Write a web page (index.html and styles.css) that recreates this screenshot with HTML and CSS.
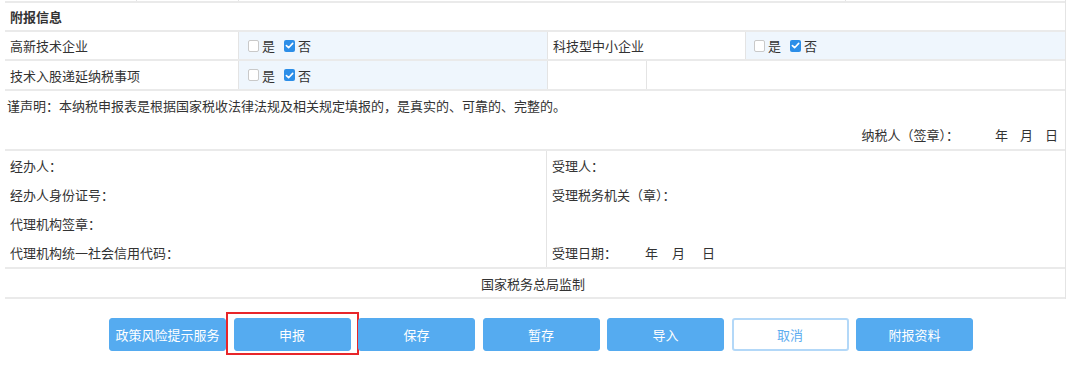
FILE: index.html
```html
<!DOCTYPE html>
<html lang="zh-CN">
<head>
<meta charset="utf-8">
<title>附报信息</title>
<link rel="stylesheet" href="styles.css">
</head>
<body>
<div class="form">
  <div class="row row-top">
    <div class="cell t1"></div>
    <div class="cell t2"></div>
    <div class="cell t3"></div>
    <div class="cell grow"></div>
  </div>
  <div class="row row-head">
    <div class="cell grow head">附报信息</div>
  </div>
  <div class="row row-a">
    <div class="cell lab c1">高新技术企业</div>
    <div class="cell opt c2">
      <span class="cb"></span><span class="ol">是</span>
      <span class="cb on"><svg viewBox="0 0 11 11" width="11" height="11"><path d="M2.4 5.6 L4.6 7.7 L8.7 3.4" fill="none" stroke="#fff" stroke-width="1.6" stroke-linecap="round" stroke-linejoin="round"/></svg></span><span class="ol">否</span>
    </div>
    <div class="cell lab c3">科技型中小企业</div>
    <div class="cell opt opt-r grow">
      <span class="cb"></span><span class="ol">是</span>
      <span class="cb on"><svg viewBox="0 0 11 11" width="11" height="11"><path d="M2.4 5.6 L4.6 7.7 L8.7 3.4" fill="none" stroke="#fff" stroke-width="1.6" stroke-linecap="round" stroke-linejoin="round"/></svg></span><span class="ol">否</span>
    </div>
  </div>
  <div class="row row-b">
    <div class="cell lab c1">技术入股递延纳税事项</div>
    <div class="cell opt c2">
      <span class="cb"></span><span class="ol">是</span>
      <span class="cb on"><svg viewBox="0 0 11 11" width="11" height="11"><path d="M2.4 5.6 L4.6 7.7 L8.7 3.4" fill="none" stroke="#fff" stroke-width="1.6" stroke-linecap="round" stroke-linejoin="round"/></svg></span><span class="ol">否</span>
    </div>
    <div class="cell c3b"></div>
    <div class="cell grow"></div>
  </div>
  <div class="row row-decl">
    <div class="decl">
      <div class="decl-line">谨声明<span class="p">：</span>本纳税申报表是根据国家税收法律法规及相关规定填报的<span class="p">，</span>是真实的、可靠的、完整的。</div>
      <div class="decl-sign">纳税人（签章）<span class="p">：</span><span class="d-y">年</span><span class="d-m">月</span><span class="d-m">日</span></div>
    </div>
  </div>
  <div class="row row-sign">
    <div class="sign-col sign-left">
      <div class="sline">经办人<span class="p">：</span></div>
      <div class="sline">经办人身份证号<span class="p">：</span></div>
      <div class="sline">代理机构签章<span class="p">：</span></div>
      <div class="sline">代理机构统一社会信用代码<span class="p">：</span></div>
    </div>
    <div class="sign-col sign-right">
      <div class="sline">受理人<span class="p">：</span></div>
      <div class="sline">受理税务机关（章）<span class="p">：</span></div>
      <div class="sline"></div>
      <div class="sline">受理日期<span class="p">：</span><span class="r-y">年</span><span class="r-m">月</span><span class="r-d">日</span></div>
    </div>
  </div>
  <div class="row row-foot">
    <div class="cell grow foot">国家税务总局监制</div>
  </div>
</div>

<div class="actions">
  <button class="btn">政策风险提示服务</button>
  <div class="marked"><button class="btn">申报</button></div>
  <button class="btn">保存</button>
  <button class="btn">暂存</button>
  <button class="btn">导入</button>
  <button class="btn btn-ghost">取消</button>
  <button class="btn">附报资料</button>
</div>
</body>
</html>
```

FILE: styles.css
```css
html, body {
  margin: 0;
  padding: 0;
  background: #ffffff;
}

body {
  font-family: "Noto Sans CJK SC", "Noto Sans", sans-serif;
  font-size: 13px;
  color: #333333;
  min-height: 370px;
}

/* centred full-width punctuation, as in the reference font */
.p {
  font-family: "Noto Sans CJK TC", "Noto Sans CJK SC", sans-serif;
}

.form {
  margin-left: 5px;
  width: 1061px;
  box-sizing: border-box;
  border-right: 1px solid #e4e4e4;
}

.row {
  display: flex;
  box-sizing: border-box;
  border-bottom: 2px solid #eaeaea;
}

.row-top { height: 3px; }
.row-head { height: 29px; }
.row-a { height: 29px; }
.row-b { height: 30px; }
.row-decl { height: 60px; }
.row-foot { height: 30px; }

.cell {
  box-sizing: border-box;
  display: flex;
  align-items: center;
  white-space: nowrap;
}

.cell + .cell {
  border-left: 1px solid #e4e4e4;
}

.grow { flex: 1; }

.t1 { width: 131px; }
.t2 { width: 102px; }
.t3 { width: 607px; }

.head {
  padding-left: 5px;
  font-weight: bold;
  color: #333333;
}

.lab { padding-left: 5px; }

.c1 { width: 233px; }
.c2 { width: 309px; }
.c3 { width: 198px; }
.c3b { width: 99px; }

.opt {
  background: #eff6fd;
  padding-left: 9px;
}

.opt-r { padding-left: 8px; }

.cb {
  width: 11px;
  height: 12px;
  box-sizing: border-box;
  border: 1px solid #c9c9c9;
  border-radius: 2px;
  background: #ffffff;
  display: inline-flex;
  align-items: center;
  justify-content: center;
}

.cb.on {
  border: none;
  background: #2c8ee8;
  margin-left: 9px;
}

.cb svg {
  display: block;
}

.ol {
  margin-left: 3px;
  color: #333333;
}

.decl {
  flex: 1;
  display: flex;
  flex-direction: column;
}

.decl-line {
  height: 30px;
  line-height: 30px;
  padding-left: 2px;
  white-space: nowrap;
}

.decl-sign {
  height: 28px;
  line-height: 28px;
  text-align: right;
  padding-right: 7px;
  white-space: nowrap;
}

.d-y { margin-left: 36px; }
.d-m { margin-left: 12px; }

.sign-col {
  display: flex;
  flex-direction: column;
  box-sizing: border-box;
}

.sign-left {
  width: 541px;
  padding-left: 5px;
}

.sign-right {
  flex: 1;
  border-left: 1px solid #e4e4e4;
  padding-left: 5px;
}

.sline {
  height: 29px;
  line-height: 29px;
  white-space: nowrap;
}

.r-y { margin-left: 28px; }
.r-m { margin-left: 14px; }
.r-d { margin-left: 17px; }

.foot {
  justify-content: center;
  padding-right: 4px;
}

.actions {
  display: flex;
  align-items: flex-start;
  gap: 7.5px;
  padding-left: 109px;
  margin-top: 19px;
  padding-bottom: 18px;
}

.btn {
  width: 117px;
  height: 33px;
  box-sizing: border-box;
  border: 1px solid #55abf0;
  border-radius: 3px;
  background: #55abf0;
  color: #ffffff;
  font-family: "Noto Sans CJK SC", "Noto Sans", sans-serif;
  font-size: 13px;
  padding: 0;
  cursor: pointer;
  flex: none;
}

.btn-ghost {
  background: #ffffff;
  border: 2px solid #b3d8f8;
  color: #5eacef;
}

/* red highlight frame drawn round the 申报 button */
.marked {
  display: flex;
  flex: none;
  border: 2px solid #e8262a;
  padding: 4px 6px 2px 6px;
  margin: -6px -8px -4px -8px;
}
```
